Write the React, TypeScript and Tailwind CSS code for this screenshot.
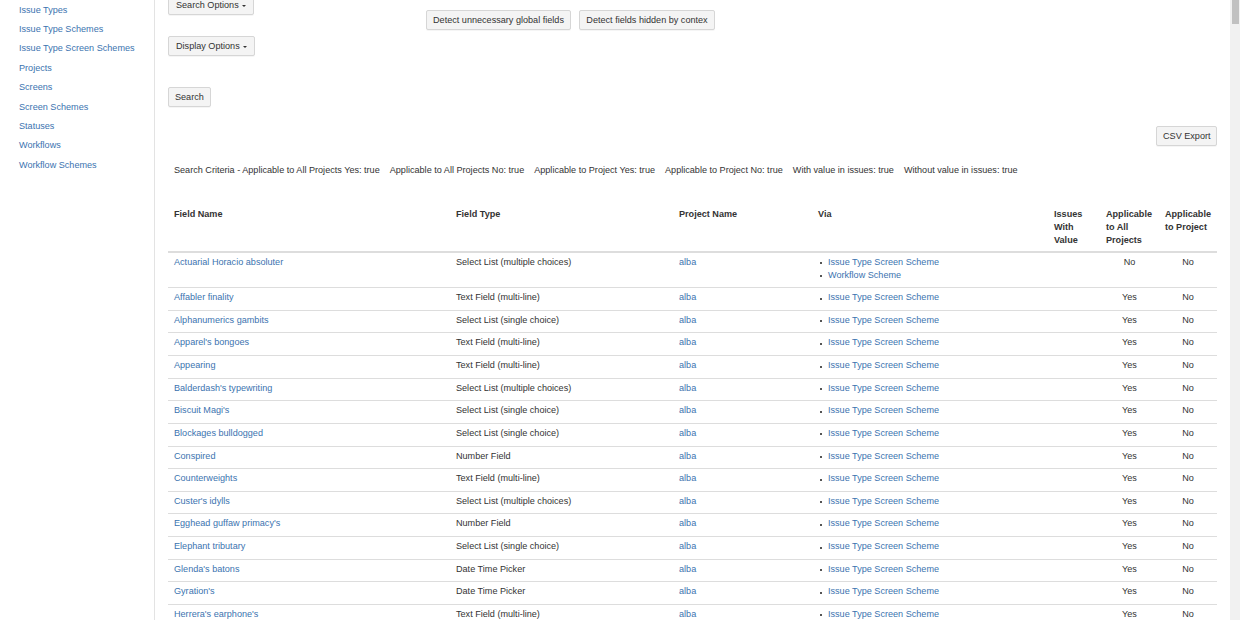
import React from 'react';

const sidebarLinks = [
  'Issue Types',
  'Issue Type Schemes',
  'Issue Type Screen Schemes',
  'Projects',
  'Screens',
  'Screen Schemes',
  'Statuses',
  'Workflows',
  'Workflow Schemes',
];

const criteria = [
  'Search Criteria - Applicable to All Projects Yes: true',
  'Applicable to All Projects No: true',
  'Applicable to Project Yes: true',
  'Applicable to Project No: true',
  'With value in issues: true',
  'Without value in issues: true',
];

interface FieldRow {
  name: string;
  type: string;
  via: string[];
  all: string;
}

const ITSS = 'Issue Type Screen Scheme';

const rows: FieldRow[] = [
  { name: 'Actuarial Horacio absoluter', type: 'Select List (multiple choices)', via: [ITSS, 'Workflow Scheme'], all: 'No' },
  { name: 'Affabler finality', type: 'Text Field (multi-line)', via: [ITSS], all: 'Yes' },
  { name: 'Alphanumerics gambits', type: 'Select List (single choice)', via: [ITSS], all: 'Yes' },
  { name: "Apparel's bongoes", type: 'Text Field (multi-line)', via: [ITSS], all: 'Yes' },
  { name: 'Appearing', type: 'Text Field (multi-line)', via: [ITSS], all: 'Yes' },
  { name: "Balderdash's typewriting", type: 'Select List (multiple choices)', via: [ITSS], all: 'Yes' },
  { name: "Biscuit Magi's", type: 'Select List (single choice)', via: [ITSS], all: 'Yes' },
  { name: 'Blockages bulldogged', type: 'Select List (single choice)', via: [ITSS], all: 'Yes' },
  { name: 'Conspired', type: 'Number Field', via: [ITSS], all: 'Yes' },
  { name: 'Counterweights', type: 'Text Field (multi-line)', via: [ITSS], all: 'Yes' },
  { name: "Custer's idylls", type: 'Select List (multiple choices)', via: [ITSS], all: 'Yes' },
  { name: "Egghead guffaw primacy's", type: 'Number Field', via: [ITSS], all: 'Yes' },
  { name: 'Elephant tributary', type: 'Select List (single choice)', via: [ITSS], all: 'Yes' },
  { name: "Glenda's batons", type: 'Date Time Picker', via: [ITSS], all: 'Yes' },
  { name: "Gyration's", type: 'Date Time Picker', via: [ITSS], all: 'Yes' },
  { name: "Herrera's earphone's", type: 'Text Field (multi-line)', via: [ITSS], all: 'Yes' },
];

const Caret = () => (
  <span className="inline-block w-0 h-0 ml-[3px] align-middle border-t-[2.5px] border-x-[2.5px] border-x-transparent border-t-[#333]" />
);

const Btn = ({ children, className = '' }: { children: React.ReactNode; className?: string }) => (
  <button
    className={`h-[20px] px-[6px] border border-[#d6d6d6] rounded-[2px] bg-[#f4f4f4] text-[#333] text-[9.1px] leading-[18px] shadow-[0_1px_0_rgba(0,0,0,0.04)] whitespace-nowrap ${className}`}
  >
    {children}
  </button>
);

const App = () => {
  return (
    <div className="h-[620px] overflow-hidden flex bg-white font-['Liberation_Sans',Arial,sans-serif] text-[9.1px] text-[#333]">
      <aside className="w-[155px] shrink-0 border-r border-[#e3e3e3] pl-[19px]">
        <ul className="mt-[0.6px]">
          {sidebarLinks.map((link) => (
            <li key={link} className="leading-[19.4px]">
              <a href="#" className="text-[#3b73af]">{link}</a>
            </li>
          ))}
        </ul>
      </aside>

      <main className="flex-1 min-w-0 px-[13px]">
        <div className="flex mt-[-5px]">
          <div className="w-[258px] shrink-0 flex flex-col items-start">
            <Btn className="px-[7px]">Search Options<Caret /></Btn>
            <Btn className="mt-[21px] px-[7px]">Display Options<Caret /></Btn>
            <Btn className="mt-[31px]">Search</Btn>
          </div>
          <div className="flex gap-[8px] mt-[15px] items-start">
            <Btn className="w-[145px] h-[19.5px]">Detect unnecessary global fields</Btn>
            <Btn className="w-[136px] h-[19.5px]">Detect fields hidden by contex</Btn>
          </div>
        </div>

        <div className="flex justify-end mt-[19px]">
          <Btn className="w-[61px]">CSV Export</Btn>
        </div>

        <p className="mt-[17.6px] pl-[6px] leading-[13px] flex gap-[10px] whitespace-nowrap">
          {criteria.map((c) => (
            <span key={c}>{c}</span>
          ))}
        </p>

        <table className="mt-[28px] w-[1049px] table-fixed border-collapse text-left">
          <colgroup>
            <col className="w-[282px]" />
            <col className="w-[223px]" />
            <col className="w-[139px]" />
            <col className="w-[236px]" />
            <col className="w-[52px]" />
            <col className="w-[59px]" />
            <col className="w-[58px]" />
          </colgroup>
          <thead>
            <tr className="border-b-2 border-[#dddddd]">
              {['Field Name', 'Field Type', 'Project Name', 'Via', 'Issues With Value', 'Applicable to All Projects', 'Applicable to Project'].map((h) => (
                <th key={h} className="align-top font-bold leading-[13px] px-[6px] pt-[3px] pb-[4px]">
                  {h}
                </th>
              ))}
            </tr>
          </thead>
          <tbody>
            {rows.map((r) => (
              <tr key={r.name} className="border-t border-[#dddddd] align-top">
                <td className="px-[6px] pt-[3px] pb-[5.64px] leading-[13px]">
                  <a href="#" className="text-[#3b73af]">{r.name}</a>
                </td>
                <td className="px-[6px] pt-[3px] pb-[5.64px] leading-[13px]">{r.type}</td>
                <td className="px-[6px] pt-[3px] pb-[5.64px] leading-[13px]">
                  <a href="#" className="text-[#3b73af]">alba</a>
                </td>
                <td className="px-[6px] pt-[3px] pb-[5.64px] leading-[13px]">
                  <ul>
                    {r.via.map((v) => (
                      <li key={v} className="flex items-center">
                        <span className="w-[2px] h-[2px] ml-[2px] mr-[6px] mt-[2px] bg-[#555]" />
                        <a href="#" className="text-[#3b73af]">{v}</a>
                      </li>
                    ))}
                  </ul>
                </td>
                <td className="px-[6px] pt-[3px] pb-[5.64px] leading-[13px]" />
                <td className="px-[6px] pt-[3px] pb-[5.64px] leading-[13px] text-center">{r.all}</td>
                <td className="px-[6px] pt-[3px] pb-[5.64px] leading-[13px] text-center">No</td>
              </tr>
            ))}
          </tbody>
        </table>
      </main>

      <div className="w-[10px] shrink-0 bg-[#f1f1f1] pl-[2px] pr-[1px]">
        <div className="h-[24px] bg-[#c1c1c1]" />
      </div>
    </div>
  );
};

export default App;
